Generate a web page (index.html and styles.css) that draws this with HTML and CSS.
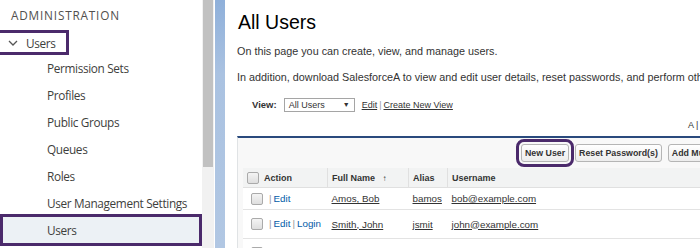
FILE: index.html
```html
<!DOCTYPE html>
<html lang="en">
<head>
    <meta charset="UTF-8">
    <title>All Users</title>
    <link rel="stylesheet" href="styles.css">
</head>
<body>
    <div class="layout">
        <div class="sidebar">
            <div class="nav-title">ADMINISTRATION</div>
            <div class="nav-group">
                <svg class="chevron" width="10" height="6" viewBox="0 0 10 6"><path d="M1 1l4 4 4-4" fill="none" stroke="#555" stroke-width="1.3"/></svg>
                <span>Users</span>
            </div>
            <div class="nav-item">Permission Sets</div>
            <div class="nav-item">Profiles</div>
            <div class="nav-item">Public Groups</div>
            <div class="nav-item">Queues</div>
            <div class="nav-item">Roles</div>
            <div class="nav-item">User Management Settings</div>
            <div class="nav-item nav-item_active">Users</div>
        </div>
        <div class="scrollbar"><div class="scrollbar_thumb"></div></div>
        <div class="strip"></div>
        <div class="main">
            <h1>All Users</h1>
            <p class="intro">On this page you can create, view, and manage users.</p>
            <p class="intro">In addition, download SalesforceA to view and edit user details, reset passwords, and perform other administrative tasks from your mobile device.</p>
            <div class="view-row">
                <b>View:</b>
                <div class="select">All Users <span class="select_arrow">&#9660;</span></div>
                <a class="plain-link" href="#">Edit</a><span class="sep">|</span><a class="plain-link" href="#">Create New View</a>
            </div>
            <div class="alpha-row">A | B | C | D | E | F</div>
            <div class="list-box">
                <div class="button-row">
                    <button class="btn btn_marked">New User</button>
                    <button class="btn">Reset Password(s)</button>
                    <button class="btn">Add Multiple Users</button>
                </div>
                <table class="user-table">
                    <tr class="head">
                        <th class="col-action"><span class="check"></span>Action</th>
                        <th class="col-name">Full Name <span class="sort">&#8593;</span></th>
                        <th class="col-alias">Alias</th>
                        <th class="col-user">Username</th>
                    </tr>
                    <tr class="row-1">
                        <td><span class="check"></span><span class="sep">|</span><a class="link" href="#">Edit</a></td>
                        <td><a class="plain-link" href="#">Amos, Bob</a></td>
                        <td><a class="plain-link" href="#">bamos</a></td>
                        <td><a class="plain-link" href="#">bob@example.com</a></td>
                    </tr>
                    <tr class="row-2">
                        <td><span class="check"></span><span class="sep">|</span><a class="link" href="#">Edit</a><span class="sep">|</span><a class="link" href="#">Login</a></td>
                        <td><a class="plain-link" href="#">Smith, John</a></td>
                        <td><a class="plain-link" href="#">jsmit</a></td>
                        <td><a class="plain-link" href="#">john@example.com</a></td>
                    </tr>
                    <tr class="row-3">
                        <td><span class="check"></span></td>
                        <td></td>
                        <td></td>
                        <td></td>
                    </tr>
                </table>
            </div>
        </div>
    </div>
</body>
</html>
```

FILE: styles.css
```css
body {
    margin: 0;
    background: #fff;
    overflow: hidden;
}
.layout {
    display: flex;
    height: 248px;
    overflow: hidden;
}
.sidebar {
    width: 202px;
    flex-shrink: 0;
    font-family: "Open Sans", sans-serif;
    font-size: 11.8px;
    letter-spacing: -0.35px;
    color: #3e3e3c;
}
.nav-title {
    height: 30px;
    line-height: 30px;
    padding-left: 11px;
    letter-spacing: 0.8px;
    color: #514f4d;
}
.nav-group {
    height: 19px;
    width: 58px;
    border: 3px solid #4b2a6b;
    border-left: 0;
    display: flex;
    align-items: center;
    gap: 8px;
    padding-left: 8px;
}
.chevron {
    flex-shrink: 0;
}
.nav-item {
    height: 27px;
    line-height: 27px;
    padding-left: 47px;
    white-space: nowrap;
}
.nav-item_active {
    height: 26px;
    line-height: 26px;
    margin-top: -3px;
    padding-left: 44px;
    background: #ecf1f5;
    border: 3px solid #4b2a6b;
}
.scrollbar {
    width: 12px;
    flex-shrink: 0;
    background: #f1f1f1;
}
.scrollbar_thumb {
    height: 167px;
    margin: 0 1px;
    background: #c1c1c1;
}
.strip {
    width: 10px;
    margin-left: 1px;
    flex-shrink: 0;
    background: linear-gradient(to bottom, #8fb0da 0%, #aac2e1 30%, #b1c7e3 100%);
}
.main {
    flex: 1;
    min-width: 0;
    padding-left: 12px;
    font-family: "Liberation Sans", Arial, sans-serif;
    color: #333;
    overflow: hidden;
}
h1 {
    margin: 10px 0 0 1px;
    font-size: 19.5px;
    line-height: 24px;
    font-weight: normal;
    color: #000;
}
.intro {
    margin: 10px 0 0;
    font-size: 10.8px;
    line-height: 14px;
    white-space: nowrap;
}
.intro + .intro {
    margin-top: 12px;
}
.view-row {
    display: flex;
    align-items: center;
    height: 15px;
    margin-top: 13px;
    padding-left: 15px;
    font-size: 9px;
}
.view-row b {
    font-size: 9.5px;
    margin-right: 7px;
}
.select {
    width: 61px;
    height: 12px;
    line-height: 12px;
    padding: 0 4px;
    margin-right: 7px;
    border: 1px solid #a5a5a5;
    font-size: 9px;
    display: flex;
    justify-content: space-between;
}
.select_arrow {
    font-size: 7px;
}
.plain-link {
    color: #333;
    text-decoration: underline;
}
.sep {
    color: #999;
    margin: 0 2px;
}
.alpha-row {
    height: 12px;
    margin-top: 7px;
    padding-left: 451px;
    font-size: 9px;
    line-height: 12px;
    color: #333;
    white-space: nowrap;
}
.list-box {
    width: 700px;
    margin-top: 5px;
    border-top: 2px solid #2a4a7d;
    border-left: 1px solid #e0e3e5;
    background: #f8f8f8;
    padding-left: 5px;
}
.button-row {
    display: flex;
    align-items: center;
    gap: 6px;
    height: 30px;
    padding-left: 278px;
}
.btn {
    height: 18px;
    padding: 0 3px;
    border: 1px solid #b5b5b5;
    border-radius: 3px;
    background: linear-gradient(#fff, #ededed);
    font-family: "Liberation Sans", Arial, sans-serif;
    font-size: 8.8px;
    font-weight: bold;
    color: #333;
    white-space: nowrap;
}
.btn_marked {
    outline: 3px solid #4b2a6b;
    outline-offset: 2px;
}
.user-table {
    table-layout: fixed;
    border-collapse: collapse;
    background: #fff;
    font-size: 9.8px;
    width: 695px;
}
.user-table th {
    height: 19px;
    padding: 0 4px;
    background: #f2f3f3;
    border-left: 1px solid #e0e0e0;
    border-bottom: 1px solid #e0e0e0;
    text-align: left;
    font-size: 9px;
    white-space: nowrap;
}
.user-table td {
    padding: 0 4px;
    border-bottom: 1px solid #e3e3e3;
    white-space: nowrap;
    overflow: hidden;
}
.user-table th.col-action {
    border-left: 0;
    width: 76px;
}
.user-table th.col-name {
    width: 72px;
}
.user-table th.col-alias {
    width: 30px;
}
.col-action, .user-table td:first-child {
    padding-left: 8px;
}
.check {
    display: inline-block;
    width: 10px;
    height: 10px;
    border: 1px solid #aaa;
    border-radius: 2px;
    background: linear-gradient(#f4f4f4, #dedede);
    vertical-align: -3px;
    margin-right: 4px;
}
.head .check {
    margin-right: 5px;
}
.sort {
    margin-left: 5px;
    font-size: 8px;
}
.row-1 td {
    height: 21px;
}
.row-2 td {
    height: 28px;
}
.row-3 td {
    height: 20px;
    vertical-align: top;
    padding-top: 8px;
}
.link {
    color: #015ba7;
    text-decoration: none;
}
```
